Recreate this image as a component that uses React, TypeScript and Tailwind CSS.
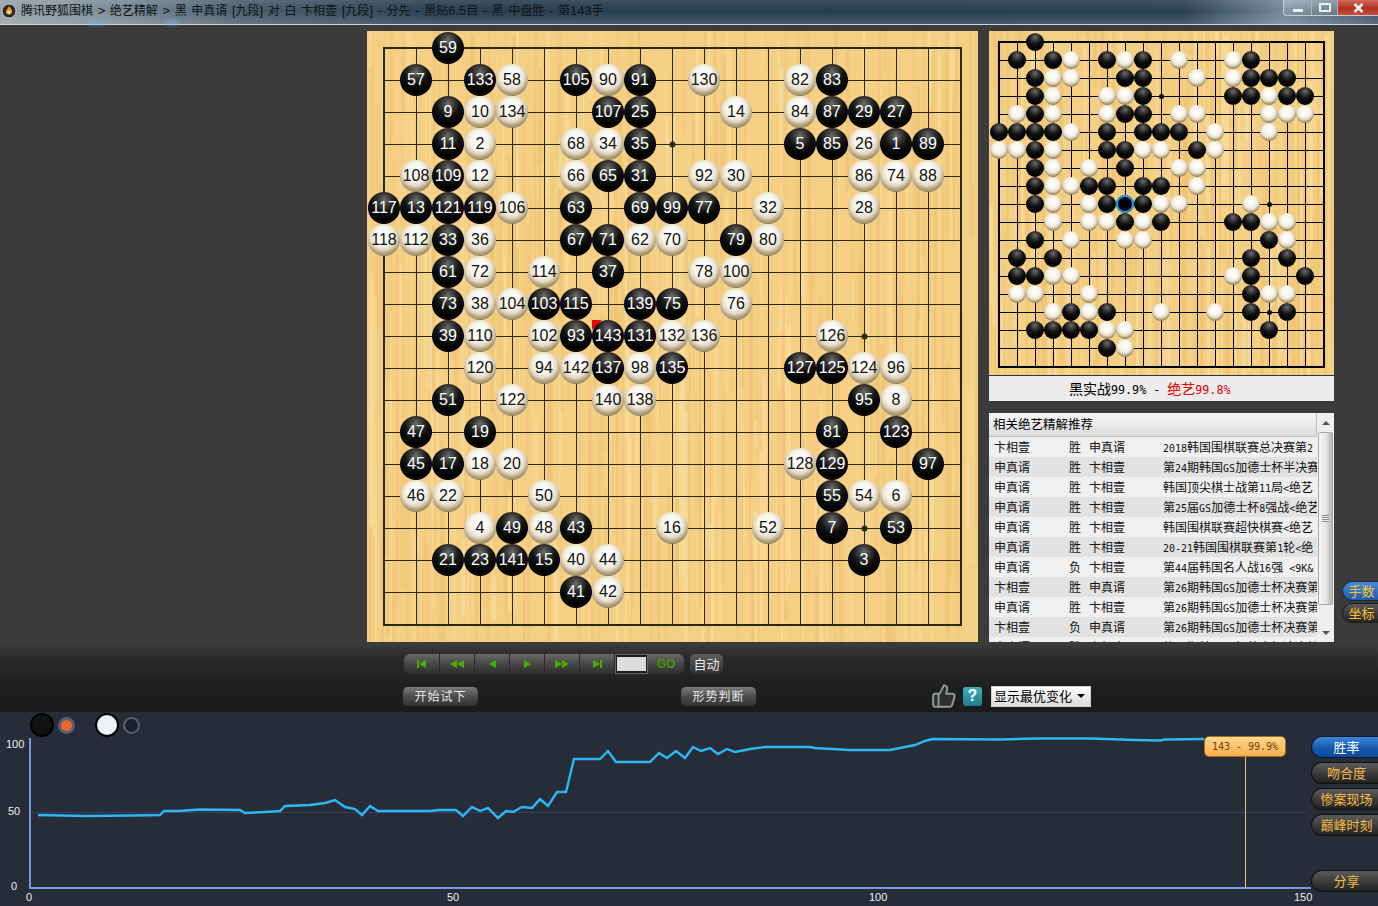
import React from "react";
import { ThumbsUp } from "lucide-react";

const rows: [number, number, number][] = [];
const data: [number, number][][] = [
  [[2, 59]],
  [[1, 57], [3, 133], [4, 58], [6, 105], [7, 90], [8, 91], [10, 130], [13, 82], [14, 83]],
  [[2, 9], [3, 10], [4, 134], [7, 107], [8, 25], [11, 14], [13, 84], [14, 87], [15, 29], [16, 27]],
  [[2, 11], [3, 2], [6, 68], [7, 34], [8, 35], [13, 5], [14, 85], [15, 26], [16, 1], [17, 89]],
  [[1, 108], [2, 109], [3, 12], [6, 66], [7, 65], [8, 31], [10, 92], [11, 30], [15, 86], [16, 74], [17, 88]],
  [[0, 117], [1, 13], [2, 121], [3, 119], [4, 106], [6, 63], [8, 69], [9, 99], [10, 77], [12, 32], [15, 28]],
  [[0, 118], [1, 112], [2, 33], [3, 36], [6, 67], [7, 71], [8, 62], [9, 70], [11, 79], [12, 80]],
  [[2, 61], [3, 72], [5, 114], [7, 37], [10, 78], [11, 100]],
  [[2, 73], [3, 38], [4, 104], [5, 103], [6, 115], [8, 139], [9, 75], [11, 76]],
  [[2, 39], [3, 110], [5, 102], [6, 93], [7, 143], [8, 131], [9, 132], [10, 136], [14, 126]],
  [[3, 120], [5, 94], [6, 142], [7, 137], [8, 98], [9, 135], [13, 127], [14, 125], [15, 124], [16, 96]],
  [[2, 51], [4, 122], [7, 140], [8, 138], [15, 95], [16, 8]],
  [[1, 47], [3, 19], [14, 81], [16, 123]],
  [[1, 45], [2, 17], [3, 18], [4, 20], [13, 128], [14, 129], [17, 97]],
  [[1, 46], [2, 22], [5, 50], [14, 55], [15, 54], [16, 6]],
  [[3, 4], [4, 49], [5, 48], [6, 43], [9, 16], [12, 52], [14, 7], [16, 53]],
  [[2, 21], [3, 23], [4, 141], [5, 15], [6, 40], [7, 44], [15, 3]],
  [[6, 41], [7, 42]],
];
data.forEach((row, r) => row.forEach(([c, n]) => rows.push([c, r, n])));

function makeStreaks(seed: number, w: number) {
  let s = seed;
  const rnd = () => {
    s = (s * 16807) % 2147483647;
    return s / 2147483647;
  };
  const out: { x: number; w: number; y: number; h: number; c: string; o: number }[] = [];
  for (let i = 0; i < w * 0.9; i++) {
    const dark = rnd() < 0.65;
    out.push({
      x: rnd() * w,
      w: 1 + rnd() * 3,
      y: rnd() * w - 60,
      h: 40 + rnd() * 240,
      c: dark ? "#eec473" : "#f9dc9c",
      o: 0.35 + rnd() * 0.5,
    });
  }
  return out;
}

function Wood({ size, seed }: { size: number; seed: number }) {
  const streaks = makeStreaks(seed, size);
  return (
    <svg className="absolute inset-0" width={size} height={size}>
      <rect width={size} height={size} fill="#f4d085" />
      {streaks.map((t, i) => (
        <rect key={i} x={t.x} y={t.y} width={t.w} height={t.h} fill={t.c} opacity={t.o} />
      ))}
    </svg>
  );
}

function Grid({ size, x0, y0, step, color, outer, hoshi }: { size: number; x0: number; y0: number; step: number; color: string; outer: number; hoshi: number }) {
  const idx = Array.from({ length: 19 }, (_, i) => i);
  return (
    <svg className="absolute inset-0" width={size} height={size} shapeRendering="crispEdges">
      {idx.map((i) => (
        <g key={i} stroke={color} strokeWidth={1}>
          <line x1={x0 + step * i + 0.5} x2={x0 + step * i + 0.5} y1={y0} y2={y0 + step * 18} />
          <line y1={y0 + step * i + 0.5} y2={y0 + step * i + 0.5} x1={x0} x2={x0 + step * 18} />
        </g>
      ))}
      <rect x={x0} y={y0} width={step * 18 + 1} height={step * 18 + 1} fill="none" stroke={color} strokeWidth={outer} />
      <g shapeRendering="auto" fill={color}>
        <circle cx={x0 + step * 9 + 0.5} cy={y0 + step * 3 + 0.5} r={hoshi} />
        <circle cx={x0 + step * 15 + 0.5} cy={y0 + step * 9 + 0.5} r={hoshi} />
        <circle cx={x0 + step * 15 + 0.5} cy={y0 + step * 15 + 0.5} r={hoshi} />
      </g>
    </svg>
  );
}

function MainBoard() {
  return (
    <div className="relative w-[611px] h-[611px] shrink-0 overflow-hidden">
      <Wood size={611} seed={7} />
      <Grid size={611} x0={17} y0={17} step={32} color="#2a2a14" outer={2} hoshi={3} />
      <div
        className="absolute w-0 h-0 border-t-[10px] border-t-[#f00000] border-r-[10px] border-r-transparent"
        style={{ left: 225, top: 289 }}
      />
      {rows.map(([c, r, n]) => {
        const black = n % 2 === 1;
        return (
          <div
            key={n}
            className={
              black
                ? "absolute w-[32px] h-[32px] rounded-full flex items-center justify-center text-white text-[16px] font-['Liberation_Sans',sans-serif] bg-[radial-gradient(circle_at_50%_25%,#6c6c6c_0px,#3a3a3a_6px,#111111_12px,#000000_20px)]"
                : "absolute w-[32px] h-[32px] rounded-full flex items-center justify-center text-[#111111] text-[16px] font-['Liberation_Sans',sans-serif] bg-[radial-gradient(circle_at_48%_38%,#ffffff_0px,#f8f5ec_9px,#e6dec9_13px,#b4a584_17px,#8e7e5c_20px)]"
            }
            style={{ left: 32 * c + 1, top: 32 * r + 1 }}
          >
            {n}
          </div>
        );
      })}
    </div>
  );
}

function MiniBoard() {
  return (
    <div className="relative w-[345px] h-[345px] overflow-hidden border-b border-[#333333]">
      <Wood size={345} seed={31} />
      <Grid size={345} x0={10} y0={11} step={18} color="#000000" outer={2} hoshi={2.5} />
      {rows.map(([c, r, n]) => {
        const black = n % 2 === 1;
        return (
          <div
            key={n}
            className={
              black
                ? "absolute w-[18px] h-[18px] rounded-full bg-[radial-gradient(circle_at_50%_25%,#6c6c6c_0px,#383838_3.5px,#101010_7px,#000000_12px)]"
                : "absolute w-[18px] h-[18px] rounded-full bg-[radial-gradient(circle_at_48%_38%,#ffffff_0px,#f8f5ec_5px,#e6dec9_7.500px,#b4a584_9.500px,#8e7e5c_11px)]"
            }
            style={{ left: 18 * c + 0.5, top: 18 * r + 1.5 }}
          >
            {n === 143 && <div className="w-[18px] h-[18px] rounded-full bg-black border-2 border-[#12a0f2]" />}
          </div>
        );
      })}
    </div>
  );
}

function T({ s, latin }: { s: string; latin?: string }) {
  return (
    <>
      {s.split(/([\x20-\x7e]+)/).map((part, i) =>
        /^[\x20-\x7e]+$/.test(part) ? (
          <span key={i} className={latin ?? "font-['DejaVu_Sans_Mono',monospace] text-[10px]"}>
            {part}
          </span>
        ) : (
          <span key={i}>{part}</span>
        )
      )}
    </>
  );
}

const listRows: [string, string, string, string][] = [
  ["卞相壹", "胜", "申真谞", "2018韩国围棋联赛总决赛第2"],
  ["申真谞", "胜", "卞相壹", "第24期韩国GS加德士杯半决赛"],
  ["申真谞", "胜", "卞相壹", "韩国顶尖棋士战第11局<绝艺"],
  ["申真谞", "胜", "卞相壹", "第25届GS加德士杯8强战<绝艺"],
  ["申真谞", "胜", "卞相壹", "韩国围棋联赛超快棋赛<绝艺"],
  ["申真谞", "胜", "卞相壹", "20-21韩国围棋联赛第1轮<绝"],
  ["申真谞", "负", "卞相壹", "第44届韩国名人战16强 <9K&"],
  ["卞相壹", "胜", "申真谞", "第26期韩国GS加德士杯决赛第"],
  ["申真谞", "胜", "卞相壹", "第26期韩国GS加德士杯决赛第"],
  ["卞相壹", "负", "申真谞", "第26期韩国GS加德士杯决赛第"],
  ["申真谞", "胜", "卞相壹", "第26期韩国GS加德士杯决赛第"],
];

function ListPanel() {
  return (
    <div className="mt-[12px] w-[345px] h-[229px] bg-[#f0f0f0] flex overflow-hidden">
      <div className="w-[328px] flex flex-col overflow-hidden">
        <div className="h-[24px] shrink-0 flex items-center pl-[4px] text-[12.5px] text-black bg-[linear-gradient(180deg,#f8f8f8,#dcdcdc)] border-b border-r border-[#bdbdbd]">
          相关绝艺精解推荐
        </div>
        {listRows.map((r, i) => (
          <div
            key={i}
            className={
              i % 2 === 0
                ? "h-[20px] shrink-0 flex items-center text-[12px] text-[#111111] bg-[#f0f0f0] whitespace-pre overflow-hidden"
                : "h-[20px] shrink-0 flex items-center text-[12px] text-[#111111] bg-[#e2e2e2] whitespace-pre overflow-hidden"
            }
          >
            <span className="w-[80px] pl-[5px] shrink-0">{r[0]}</span>
            <span className="w-[20px] shrink-0">{r[1]}</span>
            <span className="w-[74px] shrink-0">{r[2]}</span>
            <span className="shrink-0">
              <T s={r[3]} />
            </span>
          </div>
        ))}
      </div>
      <div className="w-[17px] flex flex-col items-center bg-[#efefef]">
        <div className="h-[19px] flex items-center justify-center">
          <div className="w-0 h-0 border-x-[4px] border-x-transparent border-b-[4px] border-b-[#555555]" />
        </div>
        <div className="w-[15px] h-[173px] rounded-[2px] border border-[#a8a8a8] bg-[linear-gradient(90deg,#f6f6f6,#e4e4e4_55%,#b4b4b4)] flex items-center justify-center">
          <div className="w-[7px] h-[7px] bg-[repeating-linear-gradient(180deg,#888888_0,#888888_1px,#eeeeee_1px,#eeeeee_2px)]" />
        </div>
        <div className="flex-1 flex items-end pb-[7px]">
          <div className="w-0 h-0 border-x-[4px] border-x-transparent border-t-[4px] border-t-[#555555]" />
        </div>
      </div>
    </div>
  );
}

function Nav({ kind }: { kind: number }) {
  const shapes: Record<number, React.ReactNode> = {
    0: (<><rect x="1" y="1" width="2" height="8" /><polygon points="10,1 10,9 3,5" /></>),
    1: (<><polygon points="8,1 8,9 1,5" /><polygon points="15,1 15,9 8,5" /></>),
    2: <polygon points="8,1 8,9 1,5" />,
    3: <polygon points="1,1 1,9 8,5" />,
    4: (<><polygon points="1,1 1,9 8,5" /><polygon points="8,1 8,9 15,5" /></>),
    5: (<><polygon points="1,1 1,9 8,5" /><rect x="8" y="1" width="2" height="8" /></>),
  };
  const widths = [36, 35, 35, 35, 35, 35];
  const w = kind === 1 || kind === 4 ? 16 : kind === 0 || kind === 5 ? 11 : 9;
  return (
    <div className="h-full flex items-center justify-center border-r border-[#2a2a2a]" style={{ width: widths[kind] }}>
      <svg width={w} height={10} viewBox={`0 0 ${w} 10`} fill="#46b000">
        {shapes[kind]}
      </svg>
    </div>
  );
}

function DarkBtn({ children, cls }: { children: React.ReactNode; cls: string }) {
  return (
    <div className={`h-[19px] rounded-[5px] flex items-center justify-center text-[12px] tracking-[1px] text-[#e8e8e8] bg-[linear-gradient(180deg,#7c7c7c,#4c4c4c_50%,#333333)] ${cls}`}>
      {children}
    </div>
  );
}

function Pill({ label, active }: { label: string; active?: boolean }) {
  return (
    <div
      className={
        active
          ? "h-[22px] rounded-l-full flex items-center justify-center pl-[3px] text-[13px] text-white border border-r-0 border-[#0a1a30] bg-[linear-gradient(180deg,#3d86d8,#1457ad_60%,#0e4a98)]"
          : "h-[22px] rounded-l-full flex items-center justify-center pl-[3px] text-[13px] text-[#f7bc45] border border-r-0 border-[#111111] bg-[linear-gradient(180deg,#5c5c5c,#3a3a3a_55%,#1f1f1f)]"
      }
    >
      {label}
    </div>
  );
}

const linePts =
  "38,815 85,816 133,815.5 160,815 164,811 178,811 200,809.5 240,810 245,813 265,812 280,811 285,806 310,805 325,803 335,800 345,807 355,809 362,815 370,806 378,811 430,811 " +
  "439,810 456,810 463,816 472,807 480,811 488,808 498,818 506,811 513,812 522,807 532,808 540,799 548,806 557,792 566,792 574,759 600,759 608,751 616,762 650,762 659,753 667,758 676,751 685,758 693,747 701,751 710,748 718,754 727,749 735,752 750,749 765,747 810,747 815,748 850,750 890,750 905,747 915,745 925,741 932,739 1000,739.5 1035,738.5 1092,738.5 1135,740 1160,740.5 1165,739.5 1204,739";

export default function App() {
  return (
    <div className="w-[1378px] h-[906px] overflow-hidden flex flex-col bg-[#3b3b3b] font-['Noto_Sans_CJK_SC',sans-serif]">
      {/* title bar */}
      <div className="relative h-[25px] shrink-0 flex items-start justify-between border-b border-[#cfd6da] bg-[linear-gradient(180deg,rgba(255,255,255,0.1),rgba(255,255,255,0)_45%,rgba(255,255,255,0.14)),linear-gradient(90deg,#97a4ad_0%,#7e8d98_8%,#4a5d6c_18%,#2a3f52_32%,#263b4e_60%,#2b4053_86%,#72879a_93%,#3f566a_100%)]">
        <div className="absolute left-[90px] bottom-[0px] w-[14px] h-[3px] bg-[#6fb4e0] blur-[2px]" />
        <div className="absolute left-[166px] bottom-[0px] w-[12px] h-[3px] bg-[#6fb4e0] blur-[2px]" />
        <div className="relative flex items-center h-[22px] pl-[1px]">
          <svg width="16" height="16" viewBox="0 0 16 16">
            <circle cx="8" cy="8" r="7" fill="#2a2a2a" stroke="#c8c8c8" />
            <path d="M8 3c2 2.500 3.500 4 3 6.500C10.500 12 5.500 12 5 9.500 4.700 7.500 7 6 8 3z" fill="#f09a20" />
            <circle cx="8" cy="9.500" r="1.500" fill="#fff2b0" />
          </svg>
          <span className="ml-[4px] text-[12px] text-[#101418] whitespace-pre">
            <T
              s="腾讯野狐围棋 > 绝艺精解 > 黑 申真谞 [九段] 对 白 卞相壹 [九段] - 分先 - 黑贴6.5目 - 黑 中盘胜 - 第143手"
              latin="font-['Liberation_Sans',sans-serif] text-[13px] [word-spacing:1px]"
            />
          </span>
        </div>
        <div className="relative flex h-[16px] mr-0 rounded-bl-[4px] border-l border-b border-[#c4ccd2]">
          <div className="w-[28px] flex items-center justify-center border-r border-[#a8b4bc] bg-[linear-gradient(180deg,rgba(255,255,255,0.3),rgba(255,255,255,0.08))]">
            <div className="w-[10px] h-[3px] mt-[5px] bg-[#eef2f4]" />
          </div>
          <div className="w-[26px] flex items-center justify-center border-r border-[#a8b4bc] bg-[linear-gradient(180deg,rgba(255,255,255,0.3),rgba(255,255,255,0.08))]">
            <div className="w-[12px] h-[9px] border-2 border-[#eef2f4]" />
          </div>
          <div className="w-[40px] flex items-center justify-center bg-[linear-gradient(180deg,#d06a5c,#b03020_55%,#c8503c)]">
            <svg width="11" height="10" viewBox="0 0 11 10">
              <path d="M1.500 1l8 8M9.500 1l-8 8" stroke="#f2f2f2" strokeWidth="2.600" />
            </svg>
          </div>
        </div>
      </div>

      {/* main area */}
      <div className="h-[620px] shrink-0 flex pl-[367px] pt-[6px]">
        <MainBoard />
        <div className="ml-[11px] w-[345px] shrink-0 flex flex-col">
          <MiniBoard />
          <div className="h-[25px] bg-[#ececec] flex items-center pl-[80px] text-[14px] text-black whitespace-pre">
            <span>
              黑实战<span className="font-['DejaVu_Sans_Mono',monospace] text-[11.700px]">99.9% - </span>
              <span className="text-[#f00000]">
                绝艺<span className="font-['DejaVu_Sans_Mono',monospace] text-[11.700px]">99.8%</span>
              </span>
            </span>
          </div>
          <ListPanel />
        </div>
        <div className="ml-[8px] w-[36px] shrink-0 flex flex-col gap-[2px] pt-[550px]">
          <div className="h-[20px] rounded-l-[10px] flex items-center justify-center pl-[2px] text-[13px] text-[#ffc22e] bg-[linear-gradient(180deg,#4a8bd6,#1b5cae)] border border-r-0 border-[#15263f]">
            手数
          </div>
          <div className="h-[20px] rounded-l-[10px] flex items-center justify-center pl-[2px] text-[13px] text-[#ffc22e] bg-[linear-gradient(180deg,#565656,#262626)] border border-r-0 border-[#1c1c1c]">
            坐标
          </div>
        </div>
      </div>

      {/* controls */}
      <div className="h-[67px] shrink-0 flex flex-col pt-[9px] pl-[403px] bg-[linear-gradient(180deg,#3a3a3a_0%,#2a2a2a_20%,#1f1f1f_60%,#1b1b1b_100%)]">
        <div className="flex h-[20px] items-stretch">
          <div className="ml-[1px] w-[280px] flex items-center rounded-[6px] overflow-hidden bg-[linear-gradient(180deg,#696969,#474747_50%,#2e2e2e)]">
            {[0, 1, 2, 3, 4, 5].map((k) => (
              <Nav key={k} kind={k} />
            ))}
            <div className="w-[33px] h-[20px] flex items-center justify-center shrink-0 bg-[#1c1c1c] border border-[#666666]">
              <div className="w-[29px] h-[14px] bg-[#dcdcdc]" />
            </div>
            <div className="flex-1 text-center text-[12px] font-bold text-[#3f9c00] font-['Liberation_Sans',sans-serif]">GO</div>
          </div>
          <div className="ml-[6px] w-[33px] rounded-[5px] flex items-center justify-center text-[13px] text-[#e8e8e8] bg-[linear-gradient(180deg,#5e5e5e,#2e2e2e)]">
            自动
          </div>
        </div>
        <div className="flex items-center h-[22px] mt-[11px]">
          <DarkBtn cls="w-[75px]">开始试下</DarkBtn>
          <DarkBtn cls="w-[75px] ml-[203px]">形势判断</DarkBtn>
          <ThumbsUp className="ml-[175px] w-[26px] h-[26px]" strokeWidth={1.8} color="#8f9a9a" fill="#2e2e2e" />
          <div className="ml-[6px] w-[19px] h-[19px] rounded-[3px] flex items-center justify-center text-[16px] font-bold text-white font-['Liberation_Sans',sans-serif] bg-[linear-gradient(180deg,#41b0bc,#1c7c88)]">
            ?
          </div>
          <div className="ml-[9px] w-[100px] h-[21px] flex items-center justify-between pl-[2px] pr-[5px] text-[13px] text-black border border-[#d0d0d0] bg-[linear-gradient(180deg,#ffffff,#dcdcdc)]">
            <span>显示最优变化</span>
            <div className="w-0 h-0 border-x-[4px] border-x-transparent border-t-[4px] border-t-black" />
          </div>
        </div>
      </div>

      {/* chart */}
      <div className="flex-1 flex bg-[#262c38]">
        <div className="relative w-[1311px] shrink-0">
          <svg className="absolute inset-0" width="1311" height="194">
            <g transform="translate(0,-712)">
              <line x1="30" x2="1306" y1="812.500" y2="812.500" stroke="#35406a" />
              <line x1="30" x2="30" y1="738" y2="889" stroke="#6f9ae0" strokeWidth="2" />
              <line x1="30" x2="1311" y1="888" y2="888" stroke="#6f9ae0" strokeWidth="2" />
              <line x1="1245.500" x2="1245.500" y1="757" y2="888" stroke="#f0c070" />
              <polyline points={linePts} fill="none" stroke="#2db8f4" strokeWidth="2.400" />
            </g>
          </svg>
          <div className="relative flex items-center h-[26px] pl-[30px]">
            <div className="w-[24px] h-[24px] rounded-full bg-[#111214] border-2 border-black" />
            <div className="ml-[4px] w-[17px] h-[17px] rounded-full bg-[#f0652d] border-[3px] border-[#565f75]" />
            <div className="ml-[20px] w-[24px] h-[24px] rounded-full bg-[#ecf1f7] border-2 border-black" />
            <div className="ml-[4px] w-[17px] h-[17px] rounded-full bg-[#1b2030] border-2 border-[#565f75]" />
          </div>
          <span className="absolute left-[6px] top-[25px] text-[11px] leading-[14px] text-[#eeeeee] font-['Liberation_Sans',sans-serif]">100</span>
          <span className="absolute left-[8px] top-[92px] text-[11px] leading-[14px] text-[#eeeeee] font-['Liberation_Sans',sans-serif]">50</span>
          <span className="absolute left-[11px] top-[167px] text-[11px] leading-[14px] text-[#eeeeee] font-['Liberation_Sans',sans-serif]">0</span>
          <span className="absolute left-[26px] top-[178px] text-[11px] leading-[14px] text-[#eeeeee] font-['Liberation_Sans',sans-serif]">0</span>
          <span className="absolute left-[447px] top-[178px] text-[11px] leading-[14px] text-[#eeeeee] font-['Liberation_Sans',sans-serif]">50</span>
          <span className="absolute left-[869px] top-[178px] text-[11px] leading-[14px] text-[#eeeeee] font-['Liberation_Sans',sans-serif]">100</span>
          <span className="absolute left-[1294px] top-[178px] text-[11px] leading-[14px] text-[#eeeeee] font-['Liberation_Sans',sans-serif]">150</span>
          <div className="absolute left-[1204px] top-[24px] w-[82px] h-[21px] rounded-[5px] border border-[#a86c20] flex items-center justify-center text-[10px] whitespace-pre text-[#6e4210] font-['DejaVu_Sans_Mono',monospace] bg-[linear-gradient(180deg,#ffd98e,#f7ae4e)]">
            143 - 99.9%
          </div>
        </div>
        <div className="flex-1 flex flex-col pt-[24px]">
          <div className="flex flex-col gap-[4px]">
            <Pill label="胜率" active />
            <Pill label="吻合度" />
            <Pill label="惨案现场" />
            <Pill label="巅峰时刻" />
          </div>
          <div className="mt-[34px]">
            <Pill label="分享" />
          </div>
        </div>
      </div>
    </div>
  );
}
